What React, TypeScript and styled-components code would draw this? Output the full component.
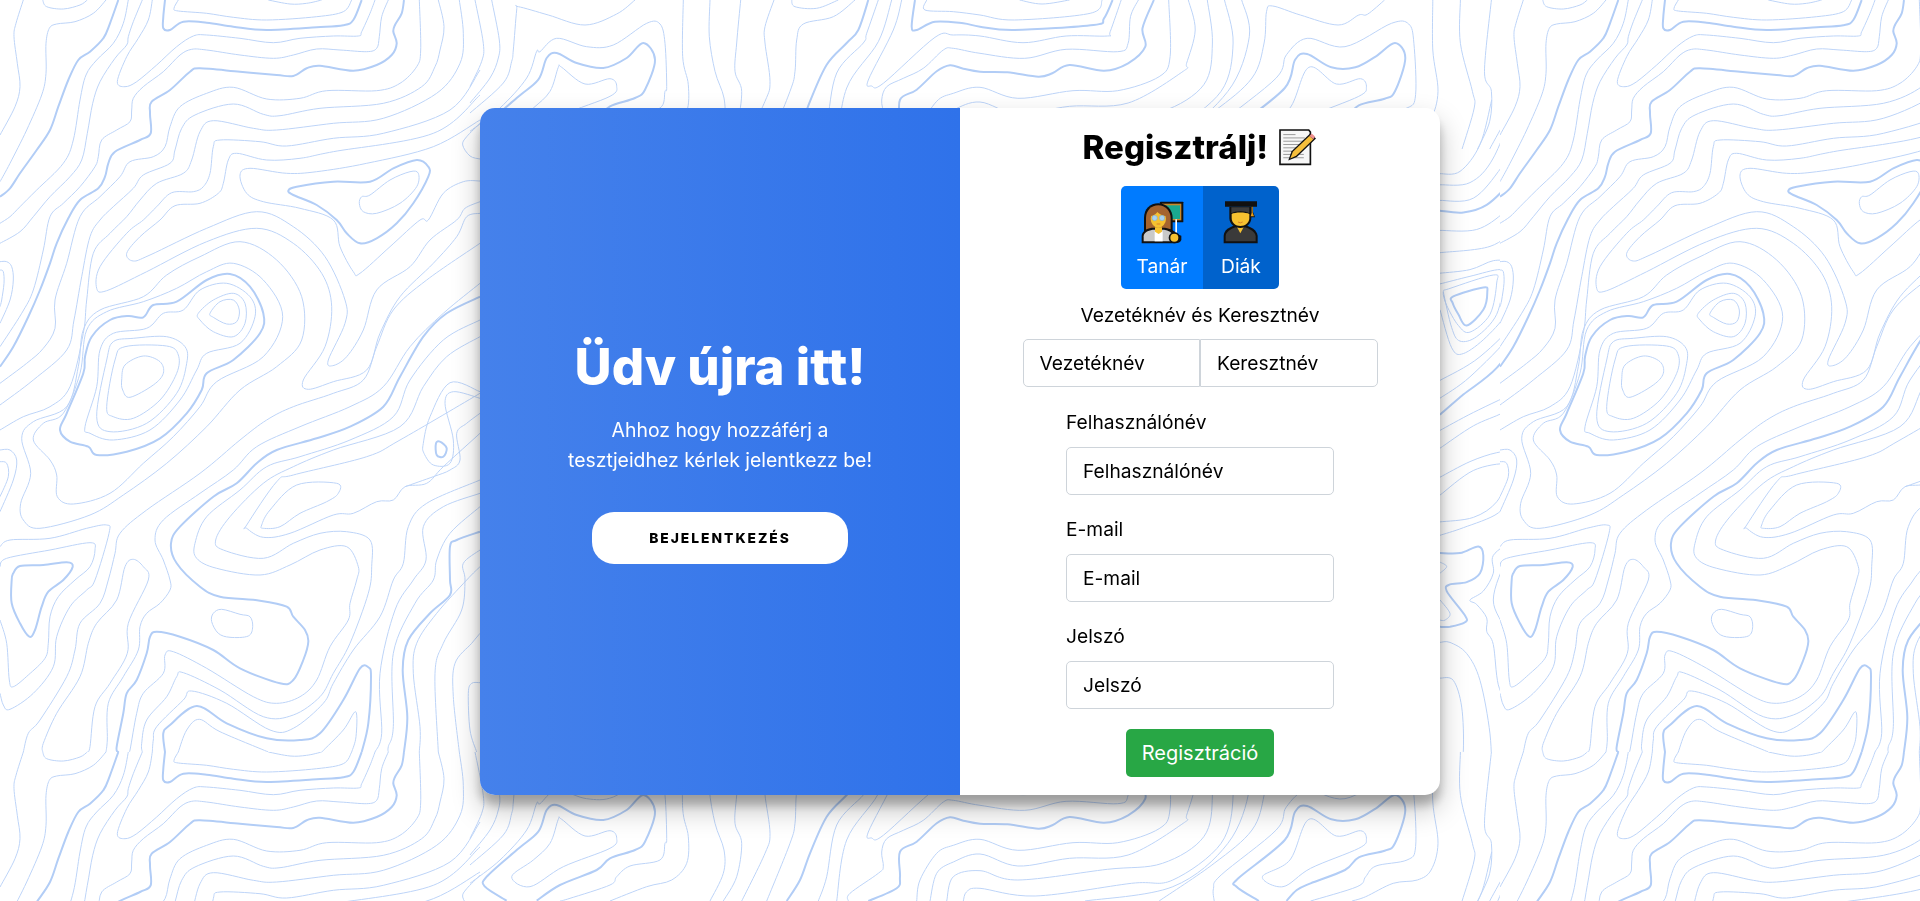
import React from 'react';
import styled, { createGlobalStyle } from 'styled-components';

const TILE_W = 1500;
const TILE_H = 752;

// contour lines, traced off the background at 3x. flat x,y lists.
// t: thick line, c: closed ring
interface Contour {
  p: number[];
  t?: boolean;
  c?: boolean;
}

interface Sheet {
  ox: number;
  oy: number;
  sx: number;
  sy: number;
  bend?: (x: number) => number;
  lines: Contour[];
}

const west: Contour[] = [
  { p: [1440, 730, 1280, 840, 1180, 930, 1130, 1040, 1090, 1140, 1000, 1180, 880, 1220, 800, 1260, 720, 1320, 600, 1420, 440, 1530, 360, 1600, 345, 1660, 325, 1740, 300, 1810, 240, 1870, 225, 1950, 200, 2030, 120, 2160, 85, 2200, 70, 2256] },
  { p: [70, 0, 48, 70, 42, 110, 52, 190, 60, 260, 45, 320, 0, 405] },
  { p: [128, 2256, 130, 2230, 170, 2140, 240, 2030, 265, 1930, 290, 1870, 350, 1800, 375, 1700, 400, 1678, 430, 1700, 445, 1740, 385, 1870, 382, 1960, 330, 2050, 285, 2120, 270, 2240, 262, 2256] },
  { p: [128, 0, 140, 20, 190, 27, 240, 15, 262, 0] },
  { p: [1440, 850, 1330, 940, 1230, 1040, 1150, 1160, 1050, 1220, 900, 1280, 770, 1340, 700, 1410, 600, 1480, 490, 1560, 465, 1620, 490, 1680, 510, 1740, 510, 1770, 480, 1810, 440, 1840, 420, 1880, 415, 1950, 370, 2030, 325, 2110, 322, 2220, 318, 2256] },
  { p: [318, 0, 280, 40, 225, 65, 170, 72, 148, 85, 138, 130, 138, 220, 125, 285, 80, 390, 30, 490, 0, 545] },
  { t: true, p: [1440, 890, 1340, 940, 1270, 1010, 1200, 1130, 1150, 1220, 1050, 1280, 950, 1315, 830, 1350, 770, 1390, 710, 1450, 640, 1490, 540, 1580, 513, 1630, 530, 1690, 600, 1760, 660, 1790, 780, 1802, 860, 1820, 880, 1850, 915, 1890, 925, 1925, 910, 1980, 880, 2040, 840, 2050, 720, 2005, 640, 1950, 540, 1910, 470, 1895, 450, 1910, 440, 1960, 410, 2040, 380, 2080, 370, 2140, 350, 2240, 355, 2256] },
  { t: true, p: [355, 0, 330, 70, 310, 115, 270, 155, 235, 180, 205, 240, 175, 320, 150, 390, 110, 450, 60, 520, 30, 565, 0, 590] },
  { p: [1440, 960, 1330, 1020, 1230, 1140, 1180, 1250, 1050, 1320, 900, 1370, 800, 1400, 720, 1470, 620, 1550, 585, 1630, 590, 1675, 650, 1705, 780, 1725, 870, 1695, 960, 1650, 1040, 1640, 1075, 1700, 1070, 1740, 1050, 1810, 1045, 1860, 990, 1940, 950, 2040, 900, 2090, 830, 2110, 760, 2090, 620, 2005, 520, 1955, 495, 1965, 490, 2020, 430, 2080, 410, 2140, 390, 2250, 385, 2256] },
  { p: [385, 0, 370, 70, 340, 130, 290, 180, 258, 225, 240, 300, 220, 420, 190, 490, 110, 570, 60, 620, 30, 650, 0, 670] },
  { p: [1440, 1010, 1340, 1070, 1270, 1160, 1200, 1280, 1000, 1350, 880, 1400, 790, 1450, 690, 1550, 647, 1620, 670, 1650, 790, 1675, 880, 1630, 960, 1600, 1040, 1595, 1110, 1620, 1115, 1700, 1105, 1780, 1050, 1930, 1000, 2020, 960, 2090, 880, 2145, 790, 2150, 660, 2070, 550, 2018, 530, 2030, 500, 2090, 440, 2160, 425, 2230, 427, 2256] },
  { p: [427, 0, 400, 65, 385, 110, 380, 135, 345, 175, 300, 245, 278, 310, 262, 400, 245, 480, 210, 530, 150, 590, 100, 650, 60, 695, 0, 730] },
  { p: [1440, 1440, 1280, 1510, 1225, 1580, 1210, 1690, 1180, 1740, 1140, 1850, 1060, 1950, 1000, 2050, 970, 2110, 880, 2185, 810, 2190, 680, 2110, 575, 2073, 550, 2100, 470, 2180, 460, 2220, 457, 2256] },
  { p: [457, 0, 445, 60, 415, 115, 380, 170, 352, 245, 375, 260, 410, 245, 470, 195, 530, 140, 580, 108, 620, 105, 720, 115, 820, 128, 900, 115, 1000, 108, 1075, 108, 1085, 95, 1110, 40, 1125, 0] },
  { p: [1125, 2256, 1145, 2200, 1140, 2020, 1185, 1830, 1240, 1740, 1278, 1680, 1270, 1580, 1330, 1520, 1440, 1480] },
  { t: true, p: [495, 2256, 490, 2200, 510, 2175, 590, 2118, 680, 2170, 800, 2215, 900, 2220, 960, 2200, 1030, 2100, 1080, 2005, 1105, 2002, 1113, 2030, 1105, 2170, 1085, 2256] },
  { t: true, p: [495, 0, 490, 50, 490, 85, 510, 90, 550, 65, 620, 68, 700, 80, 800, 90, 950, 82, 1030, 76, 1060, 60, 1085, 0] },
  { p: [535, 2256, 560, 2190, 598, 2158, 660, 2195, 805, 2256] },
  { p: [965, 2256, 1030, 2190, 1067, 2135, 1068, 2210, 1055, 2256] },
  { p: [535, 0, 522, 25, 535, 33, 620, 40, 700, 52, 800, 60, 950, 50, 1030, 35, 1055, 0] },
  { p: [805, 0, 870, 12, 920, 10, 965, 0] },
  { p: [1440, 1520, 1350, 1600, 1310, 1680, 1300, 1740, 1245, 1810, 1180, 1960, 1180, 2180, 1165, 2240, 1165, 2256] },
  { p: [1165, 0, 1145, 50, 1138, 110, 1130, 145, 1100, 155, 1020, 150, 950, 147, 880, 165, 820, 175, 720, 165, 620, 150, 575, 148, 540, 165, 490, 215, 430, 260, 400, 295, 395, 330, 390, 365, 350, 390, 305, 420, 295, 470, 285, 500, 240, 560, 190, 610, 150, 650, 130, 750, 100, 870, 65, 940, 0, 1040] },
  { t: true, p: [1440, 1595, 1370, 1620, 1350, 1640, 1350, 1740, 1350, 1785, 1290, 1840, 1225, 1920, 1208, 2010, 1222, 2150, 1212, 2256] },
  { t: true, p: [1212, 0, 1205, 40, 1185, 75, 1180, 95, 1190, 130, 1175, 165, 1130, 195, 1060, 212, 960, 197, 920, 205, 880, 228, 830, 225, 720, 215, 600, 205, 570, 215, 510, 270, 455, 305, 450, 340, 452, 400, 420, 420, 345, 455, 325, 490, 315, 530, 295, 565, 240, 600, 205, 655, 170, 730, 150, 790, 120, 870, 85, 950, 40, 1040, 0, 1100] },
  { p: [1440, 1700, 1400, 1740, 1310, 1840, 1250, 1930, 1240, 2020, 1260, 2180, 1258, 2256] },
  { p: [1258, 0, 1262, 150, 1250, 200, 1200, 250, 1130, 272, 980, 272, 900, 295, 800, 297, 700, 262, 620, 280, 540, 320, 510, 380, 495, 440, 460, 470, 390, 485, 360, 530, 300, 590, 240, 650, 200, 790, 165, 900, 165, 985, 130, 1045, 80, 1090, 0, 1150] },
  { p: [1440, 1650, 1390, 1690, 1395, 1740, 1385, 1830, 1330, 1930, 1305, 2020, 1315, 2256] },
  { p: [1315, 0, 1332, 80, 1320, 150, 1305, 200, 1265, 260, 1150, 310, 960, 325, 840, 347, 790, 343, 700, 312, 585, 345, 545, 385, 525, 450, 510, 490, 430, 525, 400, 565, 340, 620, 300, 660, 270, 710, 245, 830, 222, 960, 200, 1050, 100, 1140, 0, 1215] },
  { p: [1440, 1900, 1415, 1930, 1365, 1990, 1360, 2090, 1378, 2256] },
  { p: [1378, 0, 1390, 100, 1380, 190, 1310, 280, 1150, 355, 1000, 370, 830, 390, 760, 385, 640, 362, 600, 395, 575, 480, 550, 520, 470, 550, 420, 600, 380, 650, 330, 700, 280, 760, 260, 900, 250, 1000, 210, 1160, 150, 1220, 70, 1250, 0, 1290] },
  { p: [1440, 210, 1350, 330, 1150, 400, 1000, 415, 860, 438, 780, 425, 660, 420, 640, 440, 630, 520, 610, 560, 580, 575, 515, 578, 470, 620, 430, 660, 380, 700, 300, 800, 290, 865, 320, 872, 440, 815, 620, 725, 770, 685, 880, 730, 965, 820, 995, 920, 975, 1040, 910, 1140, 925, 1168, 1000, 1145, 1100, 1110, 1140, 1000, 1200, 890, 1300, 790, 1370, 710, 1400, 650, 1440, 640] },
  { p: [1440, 285, 1300, 400, 1000, 455, 900, 475, 800, 480, 710, 460, 685, 480, 670, 550, 655, 580, 600, 610, 525, 617, 480, 660, 420, 710, 380, 760, 400, 783, 450, 765, 620, 685, 770, 635, 880, 680, 975, 770, 1035, 900, 1035, 970, 985, 1080, 998, 1097, 1040, 1070, 1090, 990, 1130, 870, 1230, 800, 1290, 720, 1370, 660, 1395, 625, 1440, 605] },
  { p: [1440, 360, 1300, 440, 1100, 490, 950, 515, 860, 520, 750, 505, 720, 525, 740, 580, 790, 605, 900, 625, 1000, 660, 1020, 740, 1060, 815, 1080, 820, 1170, 740, 1260, 660, 1285, 660, 1330, 580, 1390, 545, 1440, 543] },
  { t: true, c: true, p: [865, 572, 890, 560, 1000, 545, 1110, 545, 1180, 505, 1250, 480, 1285, 500, 1285, 530, 1240, 610, 1190, 670, 1130, 715, 1080, 730, 1040, 700, 1010, 660, 950, 615, 880, 585] },
  { c: true, p: [1085, 590, 1110, 585, 1170, 540, 1230, 515, 1255, 520, 1250, 560, 1200, 610, 1130, 640, 1090, 635, 1078, 610] },
  { p: [1440, 370, 1400, 410, 1388, 435, 1410, 468, 1440, 477] },
  { p: [0, 1700, 20, 1675, 150, 1650, 270, 1628, 285, 1650, 270, 1700, 225, 1740, 175, 1790, 150, 1850, 145, 1930, 135, 1975, 85, 2025, 40, 2060, 28, 2040, 20, 1930, 0, 1860] },
  { p: [0, 1640, 30, 1620, 150, 1615, 260, 1585, 320, 1575, 327, 1600, 285, 1740, 260, 1770, 210, 1820, 170, 1910, 160, 2000, 100, 2080, 30, 2128, 10, 2115, 0, 2080] },
  { t: true, c: true, p: [40, 1720, 60, 1698, 130, 1695, 200, 1687, 218, 1700, 190, 1740, 145, 1775, 125, 1820, 105, 1890, 88, 1910, 60, 1870, 35, 1810, 35, 1740] },
  { c: true, p: [640, 1840, 665, 1828, 720, 1843, 750, 1850, 758, 1880, 745, 1908, 690, 1912, 655, 1900, 635, 1865] },
  { p: [0, 785, 20, 785, 35, 800, 40, 840, 30, 900, 0, 970] },
  { p: [0, 810, 10, 815, 12, 850, 5, 900, 0, 920] },
  { p: [0, 1350, 30, 1350, 50, 1380, 40, 1440, 0, 1535] },
  { p: [0, 1385, 20, 1390, 25, 1430, 0, 1490] },
  { p: [1440, 2048, 1415, 2050, 1405, 2080, 1410, 2190, 1430, 2256] },
  { p: [1440, 1180, 1200, 1320, 1100, 1370, 880, 1425, 830, 1445, 740, 1575, 740, 1585, 790, 1612, 870, 1600, 1000, 1545, 1060, 1540, 1130, 1505, 1180, 1500, 1215, 1460, 1280, 1450, 1330, 1400, 1440, 1300] },
  { c: true, p: [785, 1575, 810, 1530, 890, 1455, 1010, 1450, 1015, 1480, 980, 1505, 900, 1540, 840, 1580, 790, 1585] },
  { p: [1440, 1175, 1350, 1148, 1290, 1250, 1270, 1330, 1272, 1360, 1300, 1395, 1350, 1390, 1360, 1320, 1335, 1210, 1360, 1175, 1440, 1195] },
  { t: true, c: true, p: [1308, 1330, 1320, 1325, 1340, 1345, 1330, 1370, 1310, 1365] },
  { p: [1440, 1240, 1400, 1270, 1370, 1300, 1380, 1380, 1350, 1410, 1300, 1430, 1215, 1460] },
];

// the two hills left of the card
const hills: Contour[] = [
  { t: true, c: true, p: [180, 690, 200, 640, 250, 520, 255, 470, 275, 410, 330, 360, 385, 348, 430, 352, 460, 315, 530, 305, 620, 240, 690, 222, 750, 260, 790, 340, 780, 400, 700, 480, 620, 520, 605, 570, 560, 640, 480, 715, 380, 755, 290, 765, 265, 740, 210, 725] },
  { c: true, p: [255, 680, 290, 560, 300, 450, 340, 400, 440, 385, 490, 340, 550, 330, 600, 270, 680, 250, 750, 290, 765, 350, 720, 430, 620, 460, 590, 510, 540, 600, 450, 690, 340, 720, 270, 700] },
  { c: true, p: [290, 650, 320, 480, 340, 425, 400, 415, 500, 410, 555, 440, 560, 490, 530, 580, 440, 670, 330, 695] },
  { c: true, p: [320, 620, 345, 480, 375, 440, 500, 438, 535, 465, 530, 520, 480, 600, 400, 655, 340, 650] },
  { c: true, p: [365, 540, 375, 495, 430, 468, 480, 485, 490, 520, 460, 555, 390, 592, 368, 570] },
  { c: true, p: [595, 340, 640, 300, 700, 280, 735, 310, 735, 370, 700, 410, 640, 395, 600, 360] },
  { c: true, p: [630, 340, 660, 305, 700, 300, 718, 330, 710, 365, 680, 372, 640, 352] },
  { c: true, p: [720, 125, 830, 180, 905, 290, 905, 420, 830, 500, 720, 570, 620, 680, 500, 790, 370, 885, 270, 945, 120, 985, 70, 960, 62, 910, 92, 820, 65, 715, 100, 665, 200, 620, 235, 500, 250, 390, 300, 330, 430, 290, 500, 225, 600, 170] },
  { c: true, p: [100, 720, 130, 670, 190, 640, 240, 520, 260, 390, 320, 335, 430, 305, 530, 265, 620, 215, 700, 190, 790, 240, 848, 350, 790, 470, 650, 545, 600, 620, 520, 710, 430, 790, 330, 880, 220, 912, 172, 890, 170, 825, 150, 780] },
];

// strip above and below the card. past x=1530 the crop was squeezed a bit
const strip: Contour[] = [
  { p: [15, 0, 40, 130, 35, 184, 0, 259] },
  { p: [65, 0, 88, 120, 85, 174, 60, 234, 0, 309] },
  { p: [495, 0, 440, 42, 345, 75, 235, 45, 145, 20, 140, 30, 130, 150, 125, 184, 100, 249, 0, 339] },
  { p: [270, 447, 300, 439, 420, 399, 440, 374, 480, 342, 570, 324, 585, 274, 590, 260, 585, 130, 570, 72, 530, 70, 430, 135, 350, 140, 260, 115, 210, 155, 200, 154, 170, 234, 90, 324, 0, 394] },
  { t: true, p: [110, 446, 45, 404, 50, 374, 140, 294, 205, 239, 230, 174, 260, 159, 320, 189, 400, 204, 470, 174, 520, 129, 555, 179, 525, 269, 495, 294, 420, 319, 380, 354, 270, 399, 200, 446] },
  { c: true, p: [125, 374, 190, 324, 240, 274, 265, 202, 275, 202, 345, 252, 420, 236, 440, 259, 420, 289, 280, 344, 180, 404] },
  { p: [640, 0, 638, 170, 655, 254, 650, 334, 605, 384, 530, 404, 420, 447] },
  { p: [720, 0, 718, 110, 735, 214, 762, 294, 760, 364, 720, 447] },
  { p: [812, 0, 800, 129, 795, 214, 815, 274, 800, 374, 760, 447] },
  { p: [912, 0, 885, 80, 885, 129, 900, 244, 885, 304, 815, 447] },
  { p: [965, 0, 975, 20, 1040, 25, 1105, 0] },
  { p: [1155, 0, 1090, 50, 1000, 72, 980, 120, 975, 214, 960, 274, 890, 447] },
  { t: true, p: [1195, 0, 1165, 90, 1130, 129, 1070, 194, 1020, 304, 990, 384, 950, 447] },
  { p: [1225, 0, 1190, 100, 1180, 129, 1100, 219, 1070, 374, 1045, 447] },
  { p: [1265, 0, 1225, 125, 1130, 264, 1100, 447] },
  { p: [1295, 0, 1270, 90, 1195, 240, 1205, 258, 1240, 250, 1395, 112, 1450, 105, 1530, 108, 1655, 128, 1780, 108, 1900, 108, 1908, 95, 1940, 0] },
  { t: true, p: [1335, 0, 1325, 80, 1340, 90, 1395, 65, 1480, 70, 1530, 80, 1630, 90, 1860, 75, 1890, 55, 1915, 0] },
  { p: [1370, 0, 1365, 30, 1450, 35, 1530, 45, 1630, 60, 1850, 40, 1885, 0] },
  { p: [1645, 0, 1710, 12, 1790, 0] },
  { p: [1135, 447, 1140, 424, 1225, 364, 1240, 344, 1235, 300, 1250, 260, 1300, 235, 1360, 205, 1420, 150, 1450, 145, 1530, 160, 1660, 175, 1780, 148, 1930, 155, 1960, 130, 1967, 50, 1990, 0] },
  { t: true, p: [1195, 447, 1280, 409, 1290, 374, 1290, 299, 1340, 269, 1400, 214, 1440, 196, 1480, 206, 1530, 215, 1610, 217, 1700, 230, 1740, 220, 1790, 195, 1890, 212, 1960, 190, 2010, 140, 2002, 85, 2035, 0] },
  { p: [1340, 447, 1350, 384, 1400, 304, 1450, 280, 1530, 262, 1640, 295, 1800, 272, 1930, 272, 2050, 230, 2082, 170, 2078, 0] },
  { p: [1380, 447, 1400, 364, 1450, 330, 1530, 306, 1640, 342, 1790, 319, 1960, 309, 2120, 214, 2130, 190, 2155, 90, 2135, 0] },
  { p: [1430, 447, 1450, 374, 1530, 356, 1640, 384, 1900, 352, 2060, 334, 2180, 254, 2205, 129, 2190, 0] },
  { p: [1480, 447, 1490, 419, 1530, 409, 1690, 432, 1970, 394, 2090, 384, 2230, 274, 2265, 129, 2240, 0] },
  { p: [1835, 447, 2090, 404, 2250, 274, 2312, 110, 2290, 0] },
  { p: [2705, 0, 2655, 43, 2630, 45, 2570, 75, 2460, 45, 2380, 18, 2362, 35, 2355, 129, 2320, 234, 2210, 334, 2050, 447] },
  { p: [2210, 447, 2208, 409, 2230, 369, 2390, 234, 2420, 164, 2480, 115, 2590, 140, 2725, 70, 2775, 72, 2790, 130, 2795, 284, 2770, 324, 2680, 342, 2650, 374, 2625, 404, 2490, 447] },
  { t: true, p: [2340, 447, 2275, 404, 2280, 379, 2415, 264, 2445, 179, 2480, 162, 2550, 202, 2620, 202, 2680, 169, 2735, 129, 2765, 174, 2735, 274, 2705, 296, 2630, 316, 2590, 354, 2490, 394, 2450, 414, 2420, 447] },
  { c: true, p: [2350, 374, 2430, 324, 2485, 202, 2565, 252, 2635, 236, 2652, 262, 2630, 289, 2490, 349, 2410, 404] },
  { p: [2845, 0, 2845, 150, 2860, 274, 2840, 354, 2800, 384, 2730, 394, 2650, 434, 2610, 447] },
  { p: [2925, 0, 2925, 130, 2960, 274, 2965, 324, 2930, 447] },
  { p: [3015, 0, 2995, 214, 3015, 274, 3010, 364, 2975, 447] },
  { p: [3098, 50, 3080, 110, 3088, 230, 3098, 274, 3010, 447] },
];

// narrow bit between the card's right edge and the tile seam
const seam: Contour[] = [
  { p: [30, 165, 90, 160, 150, 100, 185, 0] },
  { p: [30, 190, 120, 185, 190, 130, 260, 0] },
  { p: [30, 225, 130, 220, 215, 150, 290, 60] },
  { t: true, p: [30, 248, 100, 252, 170, 235, 240, 185, 290, 130] },
  { p: [30, 292, 140, 290, 225, 250, 300, 190] },
  { p: [30, 342, 180, 328, 260, 285, 330, 240] },
  { p: [30, 388, 120, 380, 190, 360, 235, 365, 250, 400, 235, 470, 170, 530, 100, 568, 65, 555, 30, 470] },
  { p: [30, 412, 120, 395, 210, 380, 222, 400, 200, 480, 140, 530, 90, 540, 65, 510, 40, 430] },
  { c: true, p: [40, 430, 60, 422, 190, 392, 200, 410, 180, 480, 120, 520, 85, 505, 50, 460] },
  { t: true, c: true, p: [70, 440, 160, 420, 172, 430, 160, 470, 110, 505, 85, 480, 68, 455] },
  { p: [30, 628, 150, 575, 270, 480, 330, 360] },
  { p: [30, 668, 120, 620, 250, 520, 310, 440] },
  { t: true, p: [30, 705, 100, 660, 200, 600, 300, 500] },
  { p: [30, 740, 130, 700, 270, 650] },
  { p: [30, 780, 130, 730, 220, 700, 275, 670] },
  { p: [30, 845, 120, 810, 200, 790, 250, 790, 262, 820, 240, 880, 205, 925, 100, 958, 30, 975] },
  { p: [30, 885, 130, 830, 230, 815, 235, 840, 200, 900, 130, 935, 30, 945] },
  { t: true, p: [30, 1015, 90, 1015, 145, 1000, 160, 1020, 150, 1060, 110, 1080, 60, 1085, 50, 1100, 105, 1155, 105, 1170, 60, 1180, 30, 1180] },
  { p: [30, 1035, 50, 1045, 30, 1060] },
  { p: [30, 1120, 60, 1150, 45, 1165, 30, 1165] },
  { p: [30, 1215, 60, 1215, 110, 1240, 150, 1300, 180, 1420, 185, 1520] },
  { p: [30, 1295, 70, 1300, 95, 1360, 100, 1460, 85, 1568] },
  { p: [250, 985, 190, 1020, 190, 1060, 160, 1100, 120, 1120, 140, 1130, 170, 1160, 170, 1190, 190, 1220, 205, 1310, 240, 1365] },
  { p: [250, 1030, 230, 1030, 190, 1120, 230, 1200, 240, 1310, 270, 1310] },
];

const stretch = (x: number) => (x <= 1530 ? x : 1530 + (x - 1530) * 1.0331);

const sheets: Sheet[] = [
  { ox: 0, oy: 0, sx: 3, sy: 3, lines: west },
  { ox: 0, oy: 200, sx: 3, sy: 3, lines: hills },
  { ox: 470, oy: 0, sx: 3, sy: 3, bend: stretch, lines: strip },
  { ox: 1430, oy: 100, sx: 3, sy: 2.24, lines: seam },
];

// catmull-rom through the traced points
const smooth = (pts: [number, number][], closed?: boolean) => {
  const n = pts.length;
  const at = (i: number) => (closed ? pts[(i + n) % n] : pts[Math.max(0, Math.min(n - 1, i))]);
  const f = (v: number) => v.toFixed(1);
  let d = `M${f(pts[0][0])} ${f(pts[0][1])}`;
  const last = closed ? n : n - 1;
  for (let i = 0; i < last; i++) {
    const [a, b, c, e] = [at(i - 1), at(i), at(i + 1), at(i + 2)];
    d += `C${f(b[0] + (c[0] - a[0]) / 6)} ${f(b[1] + (c[1] - a[1]) / 6)} ${f(c[0] - (e[0] - b[0]) / 6)} ${f(c[1] - (e[1] - b[1]) / 6)} ${f(c[0])} ${f(c[1])}`;
  }
  return closed ? d + 'Z' : d;
};

const contours = sheets.flatMap((s) =>
  s.lines.map((line) => {
    const pts: [number, number][] = [];
    for (let i = 0; i < line.p.length; i += 2) {
      const x = s.bend ? s.bend(line.p[i]) : line.p[i];
      pts.push([s.ox + x / s.sx, s.oy + line.p[i + 1] / s.sy]);
    }
    return { d: smooth(pts, line.c), thick: line.t };
  })
);

const Topography = () => (
  <Backdrop aria-hidden="true">
    <defs>
      <pattern id="topo" width={TILE_W} height={TILE_H} patternUnits="userSpaceOnUse">
        {contours.map((c, i) => (
          <path
            key={i}
            d={c.d}
            fill="none"
            stroke={c.thick ? '#b2cdf6' : '#bdd4f8'}
            strokeWidth={c.thick ? 2 : 1}
          />
        ))}
      </pattern>
    </defs>
    <rect width="100%" height="100%" fill="url(#topo)" />
  </Backdrop>
);

const TeacherIcon = () => (
  <svg width="45" height="45" viewBox="90 58 135 135">
    <rect x="150" y="63" width="70" height="62" rx="2" fill="#111" />
    <rect x="156" y="69" width="58" height="50" fill="#c98a2b" />
    <rect x="160" y="74" width="50" height="41" fill="#1aa98f" />
    <path d="M102 152V112C102 85 120 68 145 68C170 68 188 88 188 112V152Z" fill="#111" />
    <path d="M108 147V112C108 90 124 74 145 74C166 74 182 92 182 112V147Z" fill="#a5642f" />
    <path d="M95 188V166C95 152 110 144 125 141H165C182 144 195 150 200 160L214 165V178Q210 188 195 188Z" fill="#111" />
    <path d="M101 182V167C101 156 113 150 128 147H162C176 149 186 155 190 165V182Z" fill="#c9c9c9" />
    <rect x="134" y="152" width="24" height="30" fill="#fff" />
    <path d="M135 140H156V153L146 160L135 153Z" fill="#f6c130" />
    <ellipse cx="145" cy="114" rx="23" ry="27" fill="#f6c130" />
    <path d="M120 106C122 92 134 84 146 85C158 86 168 96 170 106C158 106 148 100 142 94C138 100 130 106 120 106Z" fill="#a5642f" />
    <circle cx="134" cy="112" r="8" fill="#a9d3f2" stroke="#7fa6c4" strokeWidth="1.5" />
    <circle cx="156" cy="112" r="8" fill="#a9d3f2" stroke="#7fa6c4" strokeWidth="1.5" />
    <path d="M140 130H151" stroke="#d9822b" strokeWidth="3" />
    <rect x="196" y="116" width="5" height="48" fill="#fff" />
    <circle cx="193" cy="171" r="17" fill="#111" />
    <circle cx="193" cy="171" r="12" fill="#f6c130" />
  </svg>
);

const StudentIcon = () => (
  <svg width="40" height="45" viewBox="335 58 120 135">
    <path d="M343 188V166C343 148 362 138 378 134H408C424 138 443 148 445 166V188Z" fill="#111" />
    <path d="M349 182V167C349 153 366 144 380 140H406C420 144 438 153 439 167V182Z" fill="#3a3a3a" />
    <path d="M381 136H405L393 158Z" fill="#f6c130" />
    <path d="M360 78H426V112C426 130 410 142 393 142C376 142 360 130 360 112Z" fill="#111" />
    <path d="M367 100C376 94 410 94 420 100V112C420 126 408 136 393 136C378 136 367 126 367 112Z" fill="#f6c130" />
    <path d="M366 80H420V98C410 90 376 90 366 98Z" fill="#3d3d3d" />
    <path d="M347 62H443V78H347Z" fill="#111" />
    <path d="M426 74H431V94L437 110H421L426 94Z" fill="#111" />
    <path d="M427 78H430V96L434 107H424L427 96Z" fill="#e69b19" />
    <path d="M386 124Q393 129 400 124" fill="none" stroke="#d9822b" strokeWidth="3" />
  </svg>
);

const MemoIcon = () => (
  <svg width="38" height="38" viewBox="830 78 115 115">
    <path d="M833 84H920L925 90V188H833Z" fill="#f7f7f7" stroke="#111" strokeWidth="5" />
    <g stroke="#9a9a9a" strokeWidth="3">
      <path d="M843 98H880" />
      <path d="M843 108H908" />
      <path d="M843 118H908" />
      <path d="M843 128H900" />
      <path d="M843 138H885" />
      <path d="M843 148H870" />
      <path d="M843 158H905" />
      <path d="M843 168H905" />
    </g>
    <path d="M858 176L868 148L925 94L942 110L884 166Z" fill="#111" />
    <path d="M864 170L872 150L922 102L934 112L882 162Z" fill="#f6bf3c" />
    <path d="M922 102L929 95L939 104L934 112Z" fill="#ef8f8f" />
  </svg>
);

const App = () => (
  <>
    <GlobalStyle />
    <Topography />
    <Page>
      <Card>
        <WelcomePanel>
          <Heading>Üdv újra itt!</Heading>
          <Intro>
            Ahhoz hogy hozzáférj a
            <br />
            tesztjeidhez kérlek jelentkezz be!
          </Intro>
          <SignInButton>Bejelentkezés</SignInButton>
        </WelcomePanel>
        <SignupPanel>
          <Title>
            Regisztrálj! <MemoIcon />
          </Title>
          <RoleGroup>
            <RoleButton $active>
              <TeacherIcon />
              Tanár
            </RoleButton>
            <RoleButton>
              <StudentIcon />
              Diák
            </RoleButton>
          </RoleGroup>
          <NameLabel>Vezetéknév és Keresztnév</NameLabel>
          <NameGroup>
            <NameInput placeholder="Vezetéknév" />
            <NameInput placeholder="Keresztnév" />
          </NameGroup>
          <Field>
            <FieldLabel>Felhasználónév</FieldLabel>
            <FieldInput placeholder="Felhasználónév" />
          </Field>
          <Field>
            <FieldLabel>E-mail</FieldLabel>
            <FieldInput placeholder="E-mail" />
          </Field>
          <Field $last>
            <FieldLabel>Jelszó</FieldLabel>
            <FieldInput placeholder="Jelszó" />
          </Field>
          <SubmitButton>Regisztráció</SubmitButton>
        </SignupPanel>
      </Card>
    </Page>
  </>
);

export default App;

const GlobalStyle = createGlobalStyle`
  * {
    box-sizing: border-box;
  }

  body {
    margin: 0;
    background: #fff;
    font-family: Inter, 'Noto Sans', sans-serif;
    color: #000;
  }
`;

const Backdrop = styled.svg`
  position: fixed;
  top: 0;
  left: 0;
  width: 100%;
  height: 100%;
`;

const Page = styled.div`
  position: relative;
  height: 901px;
  padding-top: 108px;
  display: flex;
  justify-content: center;
  align-items: flex-start;
  overflow: hidden;
`;

const Card = styled.div`
  width: 960px;
  height: 687px;
  display: flex;
  background: #fff;
  border-radius: 15px;
  overflow: hidden;
  box-shadow: 0 14px 28px rgba(0, 0, 0, 0.25), 0 10px 10px rgba(0, 0, 0, 0.22);
`;

const WelcomePanel = styled.div`
  width: 480px;
  display: flex;
  flex-direction: column;
  align-items: center;
  justify-content: center;
  color: #fff;
  text-align: center;
  background: linear-gradient(to right, #4581eb, #2f72ea);
`;

const Heading = styled.h1`
  margin: 0 0 20px;
  font-size: 51px;
  line-height: 56px;
  font-weight: 800;
`;

const Intro = styled.p`
  margin: 0 0 37px;
  font-size: 19.4px;
  line-height: 30px;
`;

const SignInButton = styled.button`
  width: 256px;
  height: 52px;
  border: 0;
  border-radius: 22px;
  background: #fff;
  color: #000;
  font-family: inherit;
  font-size: 13.8px;
  font-weight: 800;
  letter-spacing: 2px;
  text-transform: uppercase;
`;

const SignupPanel = styled.div`
  width: 480px;
  padding-top: 14px;
  display: flex;
  flex-direction: column;
  align-items: center;
`;

const Title = styled.h2`
  margin: 0 0 14px;
  height: 50px;
  display: flex;
  align-items: center;
  gap: 4px;
  font-size: 33px;
  font-weight: 800;
  white-space: pre;
`;

const RoleGroup = styled.div`
  width: 158px;
  height: 103px;
  display: flex;
  border-radius: 5px;
  overflow: hidden;
  margin-bottom: 14px;
`;

const RoleButton = styled.div<{ $active?: boolean }>`
  flex: ${(p) => (p.$active ? '0 0 82px' : '1')};
  padding-top: 14px;
  display: flex;
  flex-direction: column;
  align-items: center;
  gap: 9px;
  background: ${(p) => (p.$active ? '#007bff' : '#0062cc')};
  color: #fff;
  font-size: 19.2px;
  line-height: 24px;
`;

const NameLabel = styled.div`
  height: 24px;
  margin-bottom: 12px;
  font-size: 19.2px;
  line-height: 24px;
`;

const NameGroup = styled.div`
  width: 355px;
  height: 48px;
  margin-bottom: 22px;
  display: flex;
`;

const NameInput = styled.input`
  width: 50%;
  height: 100%;
  padding: 0 16px;
  background: #fff;
  border: 1px solid #ced4da;
  font-family: inherit;
  font-size: 19.2px;

  &:first-child {
    border-radius: 5px 0 0 5px;
  }

  &:last-child {
    border-radius: 0 5px 5px 0;
  }

  &::placeholder {
    color: #000;
    opacity: 1;
  }
`;

const Field = styled.div<{ $last?: boolean }>`
  width: 268px;
  margin-bottom: ${(p) => (p.$last ? '20px' : '21px')};
  display: flex;
  flex-direction: column;
`;

const FieldLabel = styled.label`
  height: 27px;
  margin-bottom: 11px;
  font-size: 19.2px;
  line-height: 27px;
`;

const FieldInput = styled.input`
  width: 100%;
  height: 48px;
  padding: 0 16px;
  background: #fff;
  border: 1px solid #ced4da;
  border-radius: 5px;
  font-family: inherit;
  font-size: 19.2px;

  &::placeholder {
    color: #000;
    opacity: 1;
  }
`;

const SubmitButton = styled.button`
  width: 148px;
  height: 48px;
  border: 0;
  border-radius: 5px;
  background: #28a745;
  color: #fff;
  font-family: inherit;
  font-size: 20px;
`;
